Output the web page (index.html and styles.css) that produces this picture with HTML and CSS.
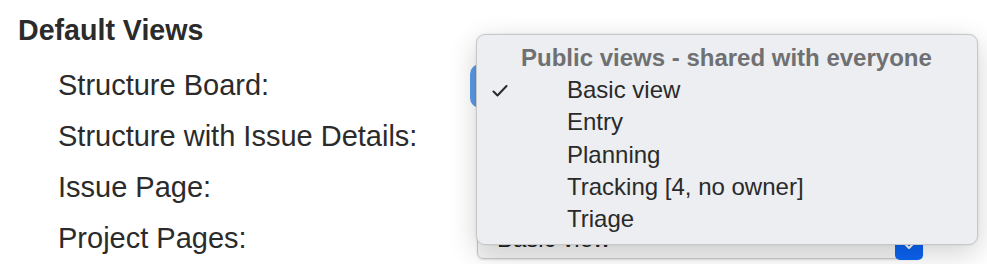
FILE: index.html
```html
<!DOCTYPE html>
<html>
<head>
<meta charset="utf-8">
<meta name="viewport" content="width=device-width, initial-scale=1.0">
<title>Default Views</title>

<link rel="stylesheet" href="styles.css">
</head>

<body>

  <section class="views">
    <h2 class="views-title">Default Views</h2>

    <div class="views-grid">
      <div class="views-label">Structure Board:</div>
      <div class="picker is-open"></div>

      <div class="views-label">Structure with Issue Details:</div>
      <div class="picker">
        <span class="picker-text"></span>
        <span class="picker-arrow"><svg width="12" height="20" viewBox="0 0 12 20"><path d="M2 7l4-4 4 4M2 13l4 4 4-4" fill="none" stroke="#fff" stroke-width="2" stroke-linecap="round" stroke-linejoin="round"/></svg></span>
      </div>

      <div class="views-label">Issue Page:</div>
      <div class="picker">
        <span class="picker-text"></span>
        <span class="picker-arrow"><svg width="12" height="20" viewBox="0 0 12 20"><path d="M2 7l4-4 4 4M2 13l4 4 4-4" fill="none" stroke="#fff" stroke-width="2" stroke-linecap="round" stroke-linejoin="round"/></svg></span>
      </div>

      <div class="views-label">Project Pages:</div>
      <div class="picker">
        <span class="picker-text">Basic view</span>
        <span class="picker-arrow"><svg width="12" height="20" viewBox="0 0 12 20"><path d="M2 7l4-4 4 4M2 13l4 4 4-4" fill="none" stroke="#fff" stroke-width="2" stroke-linecap="round" stroke-linejoin="round"/></svg></span>
      </div>
    </div>
  </section>

  <!-- open popup of the Structure Board picker -->
  <div class="popup-menu">
    <div class="popup-header">Public views - shared with everyone</div>
    <div class="popup-item is-checked">
      <svg class="popup-check" width="16" height="12" viewBox="0 0 16 12"><path d="M1.5 6.5l4 4L14.5 1" fill="none" stroke="#2a2a2a" stroke-width="2" stroke-linecap="round" stroke-linejoin="round"/></svg>
      Basic view
    </div>
    <div class="popup-item">Entry</div>
    <div class="popup-item">Planning</div>
    <div class="popup-item">Tracking [4, no owner]</div>
    <div class="popup-item">Triage</div>
  </div>

</body>
</html>
```

FILE: styles.css
```css
html, body {
  margin: 0;
  padding: 0;
  height: 100%;
  overflow: hidden;
  background: #fff;
}

body {
  font-family: "Liberation Sans", Arial, sans-serif;
  color: #2b2b2b;
}

.views {
  padding: 14px 0 0 18px;
}

.views-title {
  margin: 0;
  font-size: 28.6px;
  line-height: 33px;
  font-weight: bold;
  color: #2b2b2b;
}

.views-grid {
  display: grid;
  grid-template-columns: 419px 446px;
  grid-auto-rows: 51px;
  align-items: center;
  margin-top: 13px;
  padding-left: 40px;
}

.views-label {
  font-size: 29px;
  line-height: 51px;
  white-space: nowrap;
}

.picker {
  display: flex;
  align-items: center;
  justify-content: space-between;
  height: 38px;
  border: 1px solid #c9c9c9;
  border-radius: 6px;
  background: linear-gradient(#fdfdfd, #f3f3f3);
  box-shadow: 0 1px 2px rgba(0, 0, 0, 0.12);
  box-sizing: content-box;
}

.picker.is-open {
  height: 44px;
  margin-left: -7px;
  border: none;
  border-radius: 10px;
  background: #5b9be8;
  box-shadow: none;
}

.picker-text {
  padding-left: 19px;
  font-size: 24px;
  color: #222;
}

.picker-arrow {
  display: flex;
  align-items: center;
  justify-content: center;
  width: 28px;
  height: 37px;
  margin: 0 -1px -2px 0;
  align-self: flex-end;
  border-radius: 5px;
  background: #0b63f2;
}

.popup-menu {
  position: absolute;
  top: 34px;
  left: 476px;
  width: 500px;
  padding: 7px 0 9px;
  border: 1px solid #c6c7c9;
  border-radius: 9px;
  background: #eceef1;
  box-shadow: 0 8px 28px rgba(0, 0, 0, 0.18), 0 0 3px rgba(0, 0, 0, 0.08);
  font-size: 24px;
  line-height: 32.2px;
}

.popup-header {
  padding-left: 44px;
  font-weight: bold;
  color: #6f7072;
}

.popup-item {
  position: relative;
  padding-left: 90px;
  color: #2a2a2a;
}

.popup-check {
  position: absolute;
  left: 15px;
  top: 11px;
}
```
